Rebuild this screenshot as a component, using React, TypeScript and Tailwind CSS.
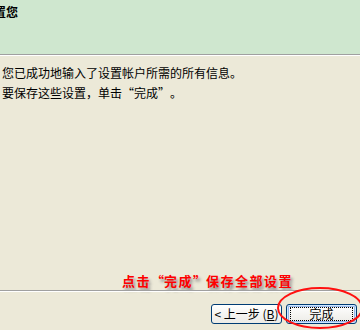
const cjk = { fontFamily: '"SimSun", "Noto Sans CJK SC", sans-serif' };

// full-width cell for a curly quote, as SimSun draws it
function Q({ open, w = 12 }: { open?: boolean; w?: number }) {
  return (
    <span className={"inline-block " + (open ? "text-right" : "text-left")} style={{ width: w }}>
      {open ? "“" : "”"}
    </span>
  );
}

function XpButton({ children, primary }: { children: React.ReactNode; primary?: boolean }) {
  return (
    <button
      className={
        "h-[20px] w-[71px] rounded-[3px] border border-[#003c74] bg-gradient-to-b from-white to-[#ecebe6] text-[12px] leading-none text-black flex items-center justify-center whitespace-pre " +
        (primary ? "shadow-[inset_0_0_0_1px_#cee7ff,inset_0_0_0_2px_#98b8ea]" : "")
      }
      style={cjk}
    >
      {primary ? (
        <span className="flex h-[14px] w-[63px] items-center justify-center border border-dotted border-black">{children}</span>
      ) : (
        children
      )}
    </button>
  );
}

export default function App() {
  return (
    <div lang="zh-CN" className="relative flex h-[330px] w-[360px] flex-col overflow-hidden bg-[#ece9d8]" style={cjk}>
      <div className="h-[54px] bg-[#cfe7cf]">
        <div className="-ml-[6px] pt-[5px] text-[12px] font-bold leading-[14px] text-black">置您</div>
      </div>
      <div className="h-px bg-[#a0a0a0]" />
      <div className="h-px bg-white" />

      <div className="flex flex-1 flex-col gap-[6px] pl-[2px] pt-[10px] text-[12px] leading-[14px] text-black">
        <p>您已成功地输入了设置帐户所需的所有信息。</p>
        <p>
          要保存这些设置，单击<Q open />完成<Q />。
        </p>
      </div>

      <div className="flex pl-[122px] pb-[2px]">
        <span className="text-[13px] font-bold leading-[14px] tracking-[1.5px] text-[#ff0000] [text-shadow:2px_3px_3px_#8a8a8a]">
          点击<Q open w={13} />完成<Q w={13} />保存全部设置
        </span>
      </div>
      <div className="h-px bg-[#a0a0a0]" />
      <div className="h-px bg-white" />

      <div className="flex h-[38px] items-start justify-end gap-[4px] pr-[3px] pt-[12px]">
        <XpButton>
          {"< 上一步 ("}
          <u>B</u>)
        </XpButton>
        <XpButton primary>完成</XpButton>
      </div>

      <svg className="pointer-events-none absolute left-[275px] top-[286px]" width="90" height="46">
        <ellipse cx="45" cy="22" rx="42" ry="20" fill="none" stroke="#ff1010" strokeWidth="2" />
      </svg>
    </div>
  );
}
